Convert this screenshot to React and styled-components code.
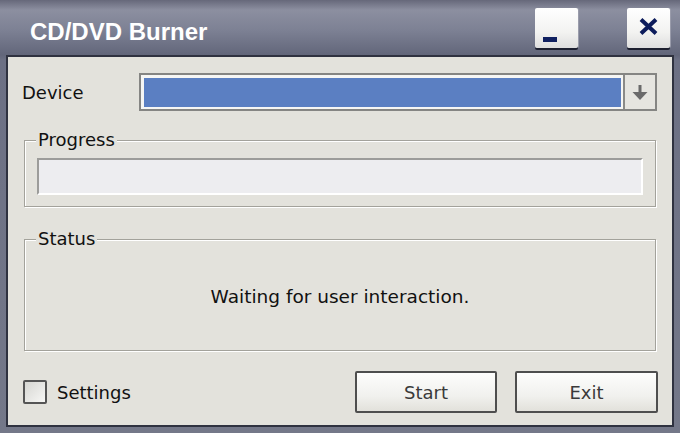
import styled, { createGlobalStyle } from "styled-components";

const GlobalStyle = createGlobalStyle`
    html, body {
        margin: 0;
        padding: 0;
        background: #6f7386;
    }
    * {
        box-sizing: border-box;
    }
`;

const Window = styled.div`
    width: 680px;
    height: 433px;
    display: flex;
    flex-direction: column;
    padding: 0 6px 6px 6px;
    background: linear-gradient(#66687a 0px, #8c8fa0 10px, #7d8194 30px, #62667a 55px, #6c7084 60px, #747889 433px);
    font-family: "DejaVu Sans", "Liberation Sans", sans-serif;
    font-size: 18px;
    color: #111;
`;

const TitleBar = styled.div`
    height: 55px;
    flex-shrink: 0;
    display: flex;
    align-items: flex-start;
    padding: 8px 4px 0 24px;
`;

const Title = styled.div`
    margin-top: 10px;
    font-family: "Liberation Sans", Arial, sans-serif;
    font-weight: bold;
    font-size: 24px;
    line-height: 28px;
    color: #ffffff;
    flex: 1;
`;

const TitleButton = styled.div`
    width: 43px;
    height: 40px;
    margin-left: ${p => p.$gap || 0}px;
    display: flex;
    align-items: ${p => p.$bottom ? "flex-end" : "center"};
    justify-content: ${p => p.$bottom ? "flex-start" : "center"};
    padding: ${p => p.$bottom ? "0 0 6px 8px" : "0 0 4px 0"};
    border-radius: 2px;
    background: linear-gradient(#ffffff, #f3f3f1 60%, #dedede);
    box-shadow: 0 2px 0 #1d2030, 1px 0 0 #9a9cab;
`;

const MinGlyph = styled.div`
    width: 14px;
    height: 5px;
    background: #102060;
`;

const Client = styled.div`
    flex: 1;
    display: flex;
    flex-direction: column;
    background: #e3e2dc;
    border: 2px solid #2f3240;
    padding: 16px 14px 11px 14px;
`;

const DeviceRow = styled.div`
    display: flex;
    align-items: center;
    height: 38px;
`;

const Label = styled.div`
    width: 117px;
    flex-shrink: 0;
`;

const Combo = styled.div`
    flex: 1;
    height: 38px;
    margin-right: 1px;
    display: flex;
    border: 2px solid #858583;
    background: #f6f6f4;
`;

const ComboValue = styled.div`
    flex: 1;
    margin: 3px 2px 2px 3px;
    background: #5b7fc2;
`;

const DropButton = styled.div`
    width: 32px;
    flex-shrink: 0;
    display: flex;
    align-items: center;
    justify-content: center;
    border-left: 2px solid #8a8a88;
    background: #e6e5e0;
`;

const Group = styled.fieldset`
    margin: ${p => p.$top}px 2px 0 2px;
    padding: ${p => p.$pad};
    border: 1px solid #a3a29b;
    box-shadow: inset 1px 1px 0 #ffffff, 1px 1px 0 #ffffff;
    min-width: 0;
`;

const Legend = styled.legend`
    padding: 0 2px;
    margin-left: -1px;
    line-height: 20px;
    background: #e3e2dc;
`;

const ProgressTrack = styled.div`
    height: 37px;
    margin-top: 8px;
    background: #ededf0;
    border-top: 2px solid #9c9c9a;
    border-left: 2px solid #9c9c9a;
    border-bottom: 2px solid #ffffff;
    border-right: 2px solid #ffffff;
`;

const StatusBody = styled.div`
    height: 94px;
    display: flex;
    align-items: center;
    justify-content: center;
    font-size: 18.5px;
`;

const BottomRow = styled.div`
    margin-top: 20px;
    height: 42px;
    display: flex;
    align-items: center;
`;

const CheckBox = styled.div`
    width: 24px;
    height: 24px;
    margin-left: 1px;
    border: 2px solid #555555;
    border-radius: 2px;
    background: linear-gradient(135deg, #d6d6d2, #f7f7f5);
`;

const CheckLabel = styled.div`
    margin-left: 10px;
    flex: 1;
`;

const Button = styled.div`
    width: ${p => p.$w}px;
    height: 42px;
    margin-left: ${p => p.$gap || 0}px;
    display: flex;
    align-items: center;
    justify-content: center;
    border: 2px solid #4e4e4e;
    border-radius: 2px;
    background: linear-gradient(#fdfdfc, #f1f1ee 60%, #e2e1db);
    color: #3a3a3a;
`;

function App() {
    return (
        <>
            <GlobalStyle />
            <Window>
                <TitleBar>
                    <Title>CD/DVD Burner</Title>
                    <TitleButton $bottom>
                        <MinGlyph />
                    </TitleButton>
                    <TitleButton $gap={49}>
                        <svg width="19" height="17" viewBox="0 0 19 17">
                            <path d="M2 1.5 L17 15.5 M17 1.5 L2 15.5" stroke="#0d1c5c" strokeWidth="4" />
                        </svg>
                    </TitleButton>
                </TitleBar>
                <Client>
                    <DeviceRow>
                        <Label>Device</Label>
                        <Combo>
                            <ComboValue />
                            <DropButton>
                                <svg width="18" height="17" viewBox="0 0 18 17" style={{ flexShrink: 0 }}>
                                    <path d="M7.5 1 H10.5 V8 H16.5 L9 16 L1.5 8 H7.5 Z" fill="#6a6a6a" />
                                </svg>
                            </DropButton>
                        </Combo>
                    </DeviceRow>
                    <Group $top={19} $pad="0 12px 11px 12px">
                        <Legend>Progress</Legend>
                        <ProgressTrack />
                    </Group>
                    <Group $top={22} $pad="0 12px 7px 12px">
                        <Legend>Status</Legend>
                        <StatusBody>Waiting for user interaction.</StatusBody>
                    </Group>
                    <BottomRow>
                        <CheckBox />
                        <CheckLabel>Settings</CheckLabel>
                        <Button $w={142}>Start</Button>
                        <Button $w={143} $gap={18}>Exit</Button>
                    </BottomRow>
                </Client>
            </Window>
        </>
    );
}

export default App;
